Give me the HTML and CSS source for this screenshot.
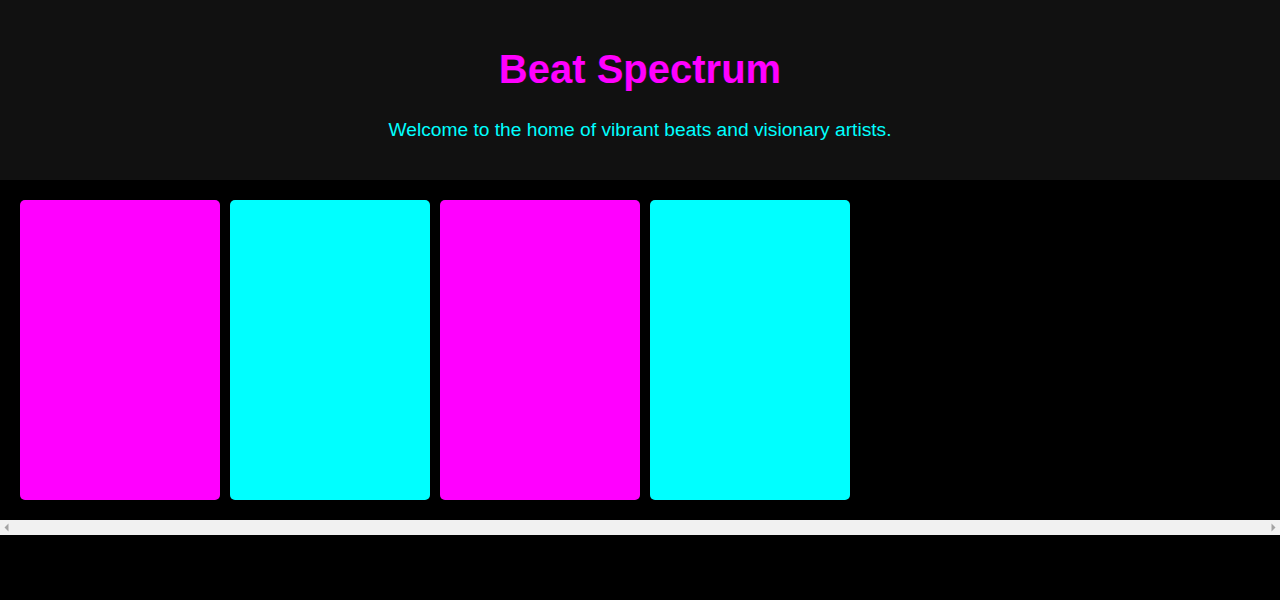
FILE: index.html
```html
<!DOCTYPE html>
<html lang="en">
<head>
<meta charset="utf-8">
<title>Beat Spectrum</title>
<link rel="stylesheet" href="styles.css">
</head>
<body>
<header class="hero">
  <h1 class="hero-title">Beat Spectrum</h1>
  <p class="hero-sub">Welcome to the home of vibrant beats and visionary artists.</p>
</header>
<section class="gallery">
  <div class="card card-magenta"></div>
  <div class="card card-cyan"></div>
  <div class="card card-magenta"></div>
  <div class="card card-cyan"></div>
</section>
<div class="scrollbar" aria-hidden="true">
  <span class="scroll-btn">
    <svg width="15" height="15" viewBox="0 0 15 15"><polygon points="4.5,7.5 8.5,3.5 8.5,11.5" fill="#a3a3a3"/></svg>
  </span>
  <span class="scroll-btn">
    <svg width="15" height="15" viewBox="0 0 15 15"><polygon points="10.5,7.5 6.5,3.5 6.5,11.5" fill="#a3a3a3"/></svg>
  </span>
</div>
</body>
</html>
```

FILE: styles.css
```css
html, body {
  margin: 0;
  padding: 0;
  background: #000;
  font-family: "Liberation Sans", Arial, sans-serif;
}

.hero {
  background: #111;
  padding: 20px;
  text-align: center;
}

.hero-title {
  color: #ff00ff;
  font-size: 2.5em;
  font-weight: bold;
  margin: 0.67em 0;
}

.hero-sub {
  color: #00ffff;
  font-size: 1.2em;
  margin: 1em 0;
}

.gallery {
  display: flex;
  gap: 10px;
  padding: 20px;
  overflow-x: auto;
}

.card {
  flex: 0 0 200px;
  height: 300px;
  border-radius: 5px;
}

.card-magenta {
  background: #ff00ff;
}

.card-cyan {
  background: #00ffff;
}

.scrollbar {
  display: flex;
  justify-content: space-between;
  height: 15px;
  background: #f1f1f1;
}

.scroll-btn {
  display: block;
  width: 15px;
  height: 15px;
}

.scroll-btn svg {
  display: block;
}
```
